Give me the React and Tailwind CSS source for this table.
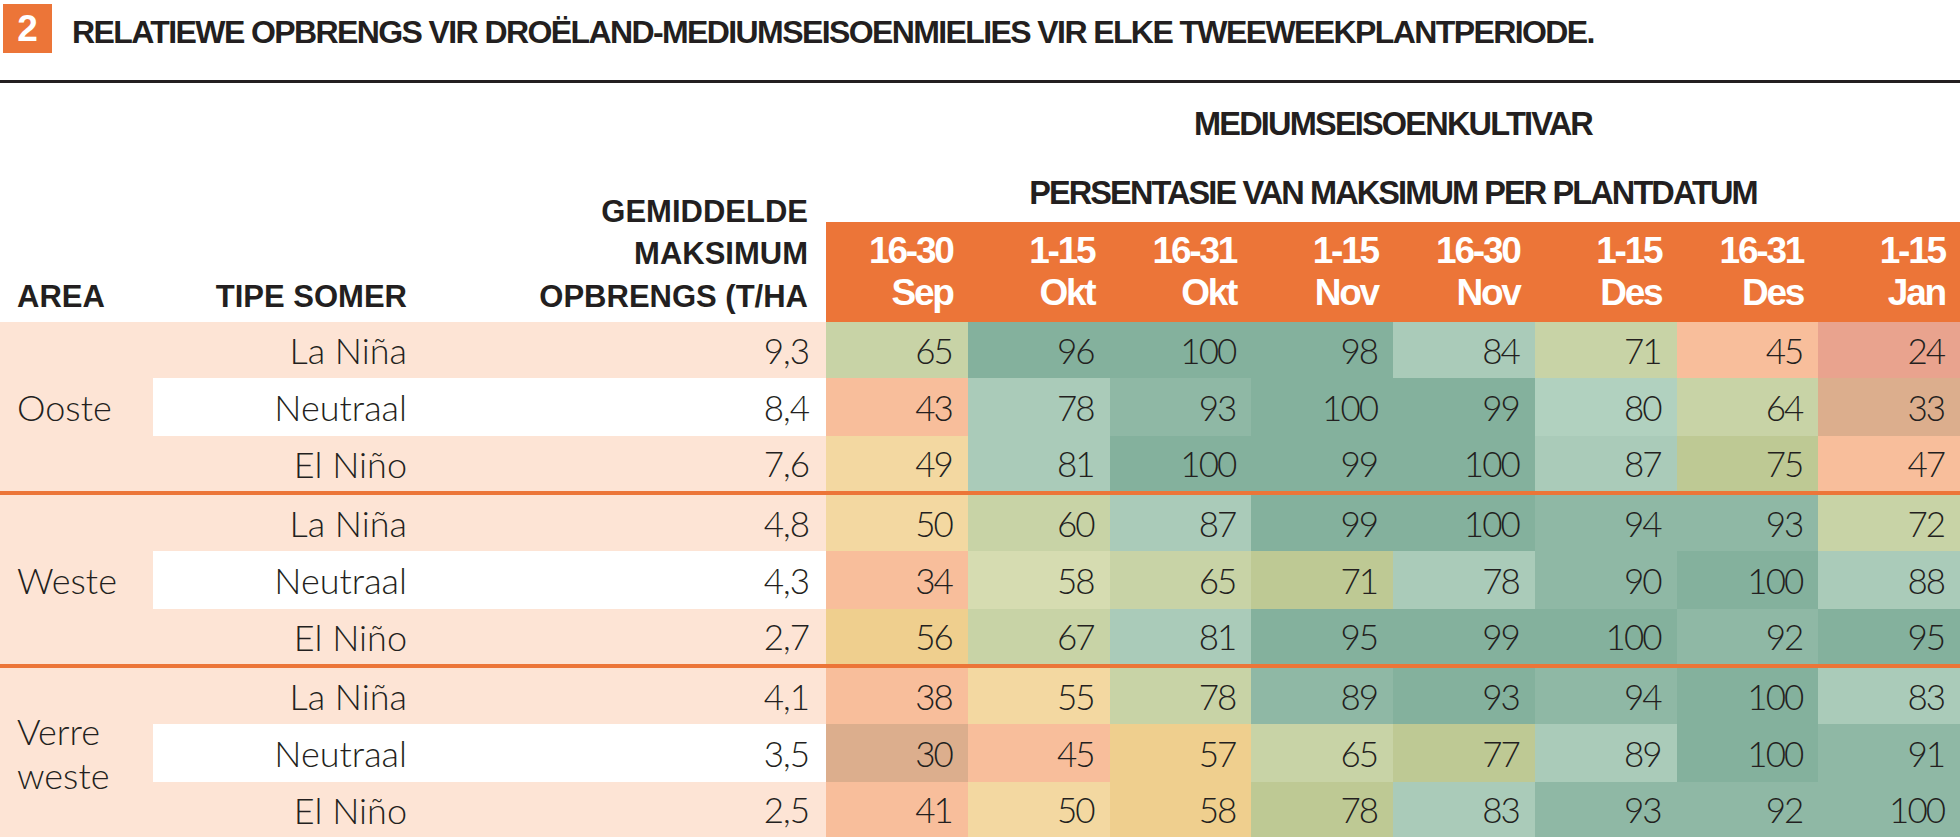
const BG = {
  g1: 'bg-[#84b19d]',
  g2: 'bg-[#8fb8a5]',
  g3: 'bg-[#aacbb9]',
  g4: 'bg-[#b1d1bf]',
  y1: 'bg-[#c8d3a6]',
  y2: 'bg-[#bec994]',
  y3: 'bg-[#d6dcb1]',
  o1: 'bg-[#f3d8a1]',
  o2: 'bg-[#efcf8e]',
  s1: 'bg-[#f8be9b]',
  s2: 'bg-[#dcae8d]',
  s3: 'bg-[#e9a38e]',
};

const dates = [
  ['16-30', 'Sep'],
  ['1-15', 'Okt'],
  ['16-31', 'Okt'],
  ['1-15', 'Nov'],
  ['16-30', 'Nov'],
  ['1-15', 'Des'],
  ['16-31', 'Des'],
  ['1-15', 'Jan'],
];

const groups = [
  {
    area: ['Ooste'],
    rows: [
      ['La Niña', '9,3', [[65, 'y1'], [96, 'g1'], [100, 'g1'], [98, 'g1'], [84, 'g3'], [71, 'y1'], [45, 's1'], [24, 's3']]],
      ['Neutraal', '8,4', [[43, 's1'], [78, 'g3'], [93, 'g2'], [100, 'g1'], [99, 'g1'], [80, 'g4'], [64, 'y1'], [33, 's2']]],
      ['El Niño', '7,6', [[49, 'o1'], [81, 'g3'], [100, 'g1'], [99, 'g1'], [100, 'g1'], [87, 'g3'], [75, 'y2'], [47, 's1']]],
    ],
  },
  {
    area: ['Weste'],
    rows: [
      ['La Niña', '4,8', [[50, 'o1'], [60, 'y1'], [87, 'g3'], [99, 'g1'], [100, 'g1'], [94, 'g2'], [93, 'g2'], [72, 'y1']]],
      ['Neutraal', '4,3', [[34, 's1'], [58, 'y3'], [65, 'y1'], [71, 'y2'], [78, 'g3'], [90, 'g2'], [100, 'g1'], [88, 'g3']]],
      ['El Niño', '2,7', [[56, 'o2'], [67, 'y1'], [81, 'g3'], [95, 'g1'], [99, 'g1'], [100, 'g1'], [92, 'g2'], [95, 'g1']]],
    ],
  },
  {
    area: ['Verre', 'weste'],
    rows: [
      ['La Niña', '4,1', [[38, 's1'], [55, 'o1'], [78, 'y1'], [89, 'g2'], [93, 'g1'], [94, 'g2'], [100, 'g1'], [83, 'g3']]],
      ['Neutraal', '3,5', [[30, 's2'], [45, 's1'], [57, 'o2'], [65, 'y1'], [77, 'y2'], [89, 'g3'], [100, 'g1'], [91, 'g2']]],
      ['El Niño', '2,5', [[41, 's1'], [50, 'o1'], [58, 'o2'], [78, 'y2'], [83, 'g3'], [93, 'g2'], [92, 'g2'], [100, 'g2']]],
    ],
  },
];

const rowH = ['h-[56px]', 'h-[58px]', 'h-[55px]'];

const Group = ({ group, last }) => (
  <div
    className={
      'grid grid-cols-[153px_270px_403px_repeat(8,1fr)] grid-rows-[56px_58px_55px] ' +
      (last ? '' : 'border-b-4 border-[#ec7538]')
    }
  >
    <div className="row-span-3 bg-[#fde4d5] flex flex-col justify-center pl-[17px] text-[36px] leading-[44px]">
      {group.area.map((a) => (
        <span key={a}>{a}</span>
      ))}
    </div>
    {group.rows.map(([tipe, gem, cells], i) => {
      const side = i === 1 ? 'bg-white' : 'bg-[#fde4d5]';
      return [
        <div key={'t' + i} className={`${side} ${rowH[i]} flex items-center justify-end pr-[16px] text-[36px]`}>
          {tipe}
        </div>,
        <div key={'g' + i} className={`${side} ${rowH[i]} flex items-center justify-end pr-[17px] text-[35px] tracking-[-1px]`}>
          {gem}
        </div>,
        ...cells.map(([v, c], j) => (
          <div
            key={i + '-' + j}
            className={`${BG[c]} ${rowH[i]} flex items-center justify-end pr-[16px] text-[35px] tracking-[-2px]`}
          >
            {v}
          </div>
        )),
      ];
    })}
  </div>
);

export default function App() {
  return (
    <div className="w-[1960px] bg-white text-[#231f20] font-['Lato',sans-serif] font-light">
      <div className="flex items-start h-[80px] pt-[4px] pl-[3px]">
        <div className="w-[49px] h-[49px] bg-[#ec7538] text-white flex items-center justify-center font-['Liberation_Sans',sans-serif] font-bold text-[37px]">
          2
        </div>
        <div className="ml-[20px] mt-[8px] leading-[40px] text-[32px] tracking-[-1.6px] font-['Liberation_Sans',sans-serif] font-bold">
          RELATIEWE OPBRENGS VIR DROËLAND-MEDIUMSEISOENMIELIES VIR ELKE TWEEWEEKPLANTPERIODE.
        </div>
      </div>
      <div className="h-[3px] bg-[#231f20]" />

      <div className="flex font-['Liberation_Sans',sans-serif] font-bold">
        <div className="w-[826px] flex items-end pb-[4px] text-[31px] leading-[42.5px]">
          <div className="w-[153px] pl-[17px]">AREA</div>
          <div className="w-[270px] text-right pr-[16px]">TIPE SOMER</div>
          <div className="w-[403px] text-right pr-[18px]">
            <div>GEMIDDELDE</div>
            <div>MAKSIMUM</div>
            <div>OPBRENGS (T/HA</div>
          </div>
        </div>
        <div className="flex-1 flex flex-col pt-[21px]">
          <div className="h-[40px] leading-[40px] text-[32.5px] tracking-[-1.8px] text-center">
            MEDIUMSEISOENKULTIVAR
          </div>
          <div className="mt-[29px] h-[40px] leading-[40px] text-[32.5px] tracking-[-1.9px] text-center">
            PERSENTASIE VAN MAKSIMUM PER PLANTDATUM
          </div>
          <div className="mt-[9px] h-[100px] bg-[#ec7538] grid grid-cols-8 text-white text-[37px] leading-[42px] tracking-[-2.2px]">
            {dates.map(([d, m], i) => (
              <div key={i} className="flex flex-col justify-center items-end pr-[15px]">
                <span>{d}</span>
                <span>{m}</span>
              </div>
            ))}
          </div>
        </div>
      </div>

      {groups.map((g, i) => (
        <Group key={i} group={g} last={i === groups.length - 1} />
      ))}
    </div>
  );
}
